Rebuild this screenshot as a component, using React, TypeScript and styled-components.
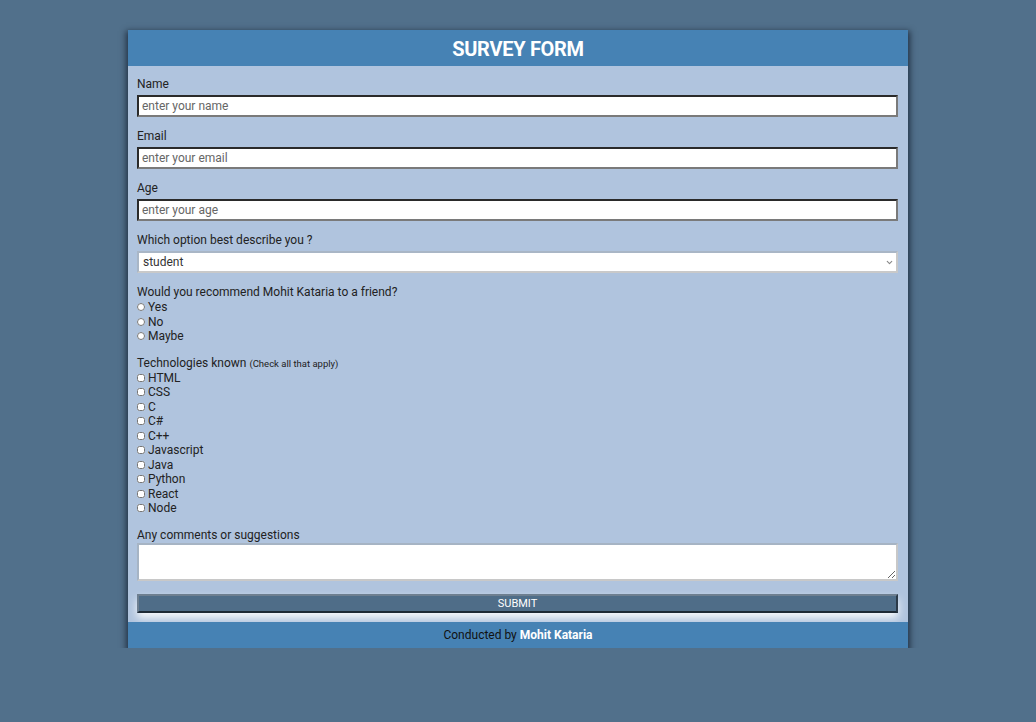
import React from 'react'
import styled, { createGlobalStyle } from 'styled-components';
import { ChevronDown } from 'lucide-react';

const GlobalStyle = createGlobalStyle`
  html, body {
    margin: 0;
    padding: 0;
    background-color: #51708b;
    font-family: Roboto, "Liberation Sans", Arial, sans-serif;
  }
  * {
    box-sizing: border-box;
  }
`;

const Card = styled.div`
  width: 780px;
  margin: 30px auto 0;
  background-color: #b0c4de;
  box-shadow: 0 3px 6px 2px rgba(20, 30, 45, 0.75);
`;

const Header = styled.h1`
  margin: 0;
  height: 36px;
  line-height: 38px;
  background-color: #4682b4;
  color: white;
  text-align: center;
  font-size: 20px;
  font-weight: 700;
  letter-spacing: -0.3px;
`;

const Form = styled.form`
  padding: 11px 10px 9px 9px;
`;

const Group = styled.div<{ $gap?: number }>`
  margin-bottom: ${(p) => p.$gap ?? 12}px;
`;

const Label = styled.label`
  display: block;
  font-size: 12px;
  line-height: 15px;
  color: #222;
  margin-bottom: 3px;
`;

const Small = styled.span`
  font-size: 9.5px;
`;

const TextInput = styled.input`
  display: block;
  width: 100%;
  height: 22px;
  padding: 0 3px;
  font-family: Roboto, "Liberation Sans", Arial, sans-serif;
  font-size: 12px;
  background: white;
  border: 2px solid #7a7a7a;
  border-top-color: #2a2a2a;
  border-left-color: #2a2a2a;
  outline: none;
  &::placeholder {
    color: #666;
  }
`;

const SelectWrap = styled.div`
  position: relative;
`;

const Select = styled.select`
  display: block;
  width: 100%;
  height: 22px;
  padding: 0 4px;
  font-family: Roboto, "Liberation Sans", Arial, sans-serif;
  font-size: 12px;
  color: #333;
  background: white;
  border: 2px solid #c9c9c9;
  border-top-color: #a9b6c6;
  border-left-color: #a9b6c6;
  border-radius: 0;
  appearance: none;
  outline: none;
`;

const Chevron = styled(ChevronDown)`
  position: absolute;
  right: 4px;
  top: 7px;
  width: 9px;
  height: 9px;
  color: #888;
  pointer-events: none;
`;

const Question = styled.div`
  font-size: 12px;
  line-height: 15px;
  color: #222;
`;

const OptionRow = styled.label`
  display: flex;
  align-items: center;
  font-size: 12px;
  line-height: 14.5px;
  color: #222;
`;

const Radio = styled.input.attrs({ type: 'radio' })`
  width: 8px;
  height: 8px;
  margin: 0 3px 0 0;
`;

const Check = styled.input.attrs({ type: 'checkbox' })`
  width: 8px;
  height: 8px;
  margin: 0 3px 0 0;
`;

const TextArea = styled.textarea`
  display: block;
  width: 100%;
  height: 38px;
  background: white;
  border: 2px solid #c8c8c8;
  border-top-color: #a6b4c4;
  border-left-color: #a6b4c4;
  resize: vertical;
  outline: none;
`;

const SubmitButton = styled.button`
  display: block;
  width: 100%;
  height: 19px;
  margin-top: 13px;
  padding: 0;
  background-color: #4f6d88;
  color: white;
  font-family: Roboto, "Liberation Sans", Arial, sans-serif;
  font-size: 11px;
  border: 2px solid #6e7f90;
  border-bottom-color: #1e2a36;
  border-right-color: #2c3a48;
  box-shadow: 0 5px 8px rgba(255, 255, 255, 0.9);
`;

const Footer = styled.footer`
  height: 26px;
  line-height: 27px;
  background-color: #4682b4;
  text-align: center;
  font-size: 12px;
  color: #111;
`;

const Author = styled.span`
  color: white;
  font-weight: 700;
`;

const technologies = ["HTML", "CSS", "C", "C#", "C++", "Javascript", "Java", "Python", "React", "Node"];

export default function App() {
  return (
    <>
      <GlobalStyle />
      <Card>
        <Header>SURVEY FORM</Header>
        <Form onSubmit={(e) => e.preventDefault()}>
          <Group>
            <Label htmlFor="name">Name</Label>
            <TextInput id="name" type="text" placeholder="enter your name" />
          </Group>
          <Group>
            <Label htmlFor="email">Email</Label>
            <TextInput id="email" type="email" placeholder="enter your email" />
          </Group>
          <Group>
            <Label htmlFor="age">Age</Label>
            <TextInput id="age" type="text" placeholder="enter your age" />
          </Group>
          <Group>
            <Label htmlFor="role">Which option best describe you ?</Label>
            <SelectWrap>
              <Select id="role" defaultValue="student">
                <option value="student">student</option>
                <option value="professional">professional</option>
                <option value="other">other</option>
              </Select>
              <Chevron strokeWidth={3} />
            </SelectWrap>
          </Group>

          {/* radios */}
          <Group>
            <Question>Would you recommend Mohit Kataria to a friend?</Question>
            {["Yes", "No", "Maybe"].map((opt) => (
              <OptionRow key={opt}>
                <Radio name="recommend" value={opt} />
                {opt}
              </OptionRow>
            ))}
          </Group>

          {/* checkboxes */}
          <Group>
            <Question>Technologies known <Small>(Check all that apply)</Small></Question>
            {technologies.map((tech) => (
              <OptionRow key={tech}>
                <Check value={tech} />
                {tech}
              </OptionRow>
            ))}
          </Group>

          <Group $gap={0}>
            <Question>Any comments or suggestions</Question>
            <TextArea />
          </Group>

          <SubmitButton type="submit">SUBMIT</SubmitButton>
        </Form>
        <Footer>
          Conducted by <Author>Mohit Kataria</Author>
        </Footer>
      </Card>
    </>
  )
}
